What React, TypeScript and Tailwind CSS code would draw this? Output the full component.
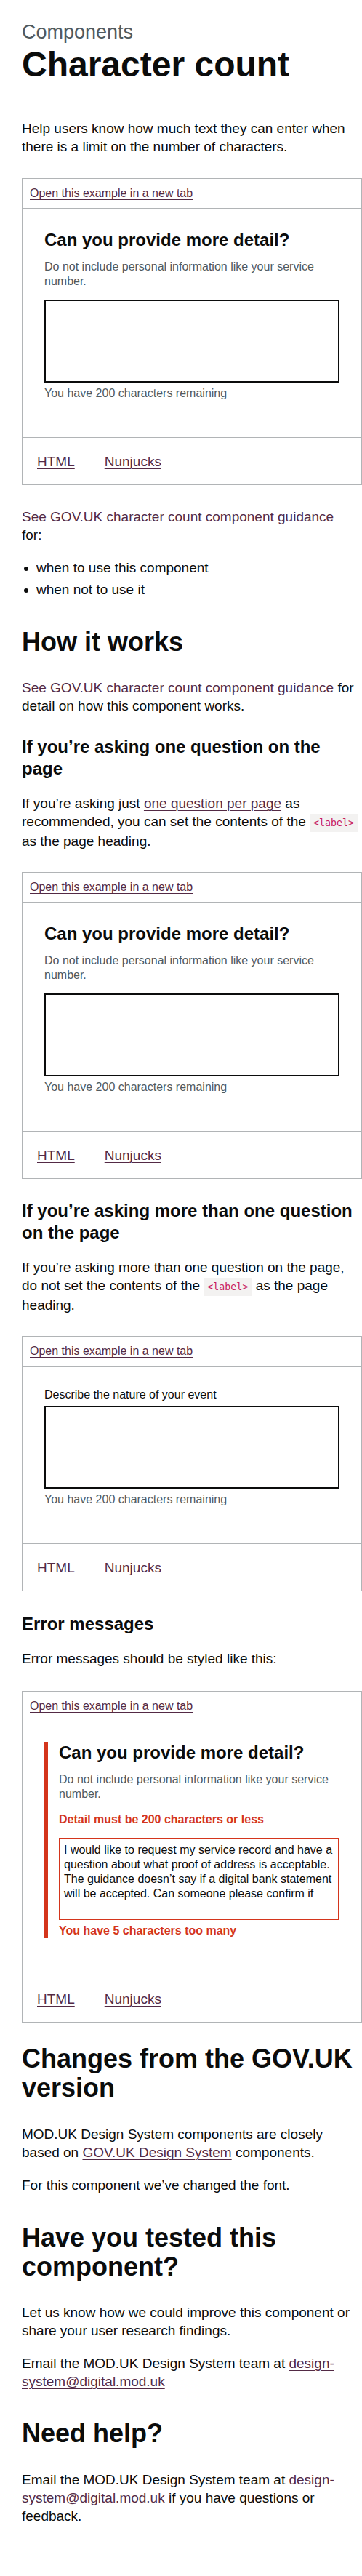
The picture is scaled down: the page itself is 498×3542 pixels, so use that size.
import React from "react";

const LINK = "text-[#532a45] underline decoration-1 underline-offset-[3px]";
const BODY = "text-[19px] leading-[25px]";
const CODE =
  "inline-block bg-[#f3f2f1] text-[#c8175d] px-[5px] font-['DejaVu_Sans_Mono',monospace] text-[13.3px] leading-[25px]";

function Tabs() {
  return (
    <div className="border-t border-[#b1b4b6] pl-[20px] pt-[20px] pb-[19px] flex gap-[41px] text-[19px] leading-[25px]">
      <a className={LINK}>HTML</a>
      <a className={LINK}>Nunjucks</a>
    </div>
  );
}

function ExampleBox({
  children,
  pt,
  mb,
}: {
  children: React.ReactNode;
  pt: string;
  mb: string;
}) {
  return (
    <div className={`w-[468px] border border-[#b1b4b6] ${mb}`}>
      <div className="px-[10px] py-[10px] text-[16px] leading-[20px]">
        <a className={LINK}>Open this example in a new tab</a>
      </div>
      <div className={`border-t border-[#b1b4b6] px-[30px] ${pt} pb-[50px]`}>
        {children}
      </div>
      <Tabs />
    </div>
  );
}

function Hint() {
  return (
    <div className="text-[16px] leading-[20px] text-[#505a5f] mb-[15px]">
      Do not include personal information like your service number.
    </div>
  );
}

function Count() {
  return (
    <div className="mt-[5px] text-[16px] leading-[20px] text-[#505a5f]">
      You have 200 characters remaining
    </div>
  );
}

function QuestionExample() {
  return (
    <>
      <div className="text-[24px] leading-[30px] font-bold mb-[12px]">
        Can you provide more detail?
      </div>
      <Hint />
      <div className="h-[114px] border-2 border-[#0b0c0c] bg-white" />
      <Count />
    </>
  );
}

function Bullet({ children }: { children: React.ReactNode }) {
  return (
    <li className="flex items-start">
      <span className="w-[6px] h-[6px] rounded-full bg-[#0b0c0c] mt-[11px] ml-[3px] mr-[11px] shrink-0" />
      <span>{children}</span>
    </li>
  );
}

export default function App() {
  return (
    <div className="w-[498px] overflow-hidden bg-white pl-[30px] pt-[29px] pb-[70px] text-[#0b0c0c] font-['Liberation_Sans',Arial,sans-serif]">
      <div className="w-[468px]">
        <div className="text-[27px] leading-[30px] text-[#505a5f] mb-[5px]">
          Components
        </div>
        <h1 className="text-[48px] leading-[50px] font-bold mb-[50px]">
          Character count
        </h1>
        <p className={`${BODY} mb-[31px]`}>
          Help users know how much text they can enter when there is a limit on
          the number of characters.
        </p>

        <ExampleBox pt="pt-[28px]" mb="mb-[31px]">
          <QuestionExample />
        </ExampleBox>

        <p className={`${BODY} mb-[20px]`}>
          <a className={LINK}>See GOV.UK character count component guidance</a>
          <br />
          for:
        </p>
        <ul className={`${BODY} mb-[40px] flex flex-col gap-[5px]`}>
          <Bullet>when to use this component</Bullet>
          <Bullet>when not to use it</Bullet>
        </ul>

        <h2 className="text-[36px] leading-[40px] font-bold mb-[30px]">
          How it works
        </h2>
        <p className={`${BODY} mb-[29px]`}>
          <a className={LINK}>See GOV.UK character count component guidance</a>{" "}
          for detail on how this component works.
        </p>

        <h3 className="text-[24px] leading-[30px] font-bold mb-[20px] max-w-[462px]">
          If you’re asking one question on the page
        </h3>
        <p className={`${BODY} mb-[30px]`}>
          If you’re asking just <a className={LINK}>one question per page</a>{" "}
          as recommended, you can set the contents of the{" "}
          <code className={CODE}>&lt;label&gt;</code> as the page heading.
        </p>

        <ExampleBox pt="pt-[28px]" mb="mb-[29px]">
          <QuestionExample />
        </ExampleBox>

        <h3 className="text-[24px] leading-[30px] font-bold mb-[20px]">
          If you’re asking more than one question on the page
        </h3>
        <p className={`${BODY} mb-[30px]`}>
          If you’re asking more than one question on the page, do not set the
          contents of the <code className={CODE}>&lt;label&gt;</code> as the
          page heading.
        </p>

        <ExampleBox pt="pt-[29px]" mb="mb-[30px]">
          <div className="text-[16px] leading-[20px] mb-[5px]">
            Describe the nature of your event
          </div>
          <div className="h-[114px] border-2 border-[#0b0c0c] bg-white" />
          <Count />
        </ExampleBox>

        <h3 className="text-[24px] leading-[30px] font-bold mb-[20px]">
          Error messages
        </h3>
        <p className={`${BODY} mb-[32px]`}>
          Error messages should be styled like this:
        </p>

        <ExampleBox pt="pt-[28px]" mb="mb-[30px]">
          <div className="border-l-[5px] border-[#d4351c] pl-[15px]">
            <div className="text-[24px] leading-[30px] font-bold mb-[12px]">
              Can you provide more detail?
            </div>
            <Hint />
            <div className="text-[16px] leading-[20px] font-bold text-[#d4351c] mb-[15px]">
              Detail must be 200 characters or less
            </div>
            <div className="h-[113px] border-2 border-[#d4351c] px-[5px] py-[5px] text-[16px] leading-[20px] text-[#0b0c0c]">
              <div className="whitespace-nowrap">
                I would like to request my service record and have a
              </div>
              <div className="whitespace-nowrap">
                question about what proof of address is acceptable.
              </div>
              <div className="whitespace-nowrap">
                The guidance doesn’t say if a digital bank statement
              </div>
              <div className="whitespace-nowrap">
                will be accepted. Can someone please confirm if
              </div>
            </div>
            <div className="mt-[5px] text-[16px] leading-[20px] font-bold text-[#d4351c]">
              You have 5 characters too many
            </div>
          </div>
        </ExampleBox>

        <h2 className="text-[36px] leading-[40px] font-bold mb-[31px] max-w-[462px]">
          Changes from the GOV.UK version
        </h2>
        <p className={`${BODY} mb-[20px]`}>
          MOD.UK Design System components are closely based on{" "}
          <a className={LINK}>GOV.UK Design System</a> components.
        </p>
        <p className={`${BODY} mb-[40px]`}>
          For this component we’ve changed the font.
        </p>

        <h2 className="text-[36px] leading-[40px] font-bold mb-[30px] max-w-[462px]">
          Have you tested this component?
        </h2>
        <p className={`${BODY} mb-[20px]`}>
          Let us know how we could improve this component or share your user
          research findings.
        </p>
        <p className={`${BODY} mb-[39px]`}>
          Email the MOD.UK Design System team at{" "}
          <a className={LINK}>design-system@digital.mod.uk</a>
        </p>

        <h2 className="text-[36px] leading-[40px] font-bold mb-[31px]">
          Need help?
        </h2>
        <p className={BODY}>
          Email the MOD.UK Design System team at{" "}
          <a className={LINK}>design-system@digital.mod.uk</a> if you have
          questions or feedback.
        </p>
      </div>
    </div>
  );
}
